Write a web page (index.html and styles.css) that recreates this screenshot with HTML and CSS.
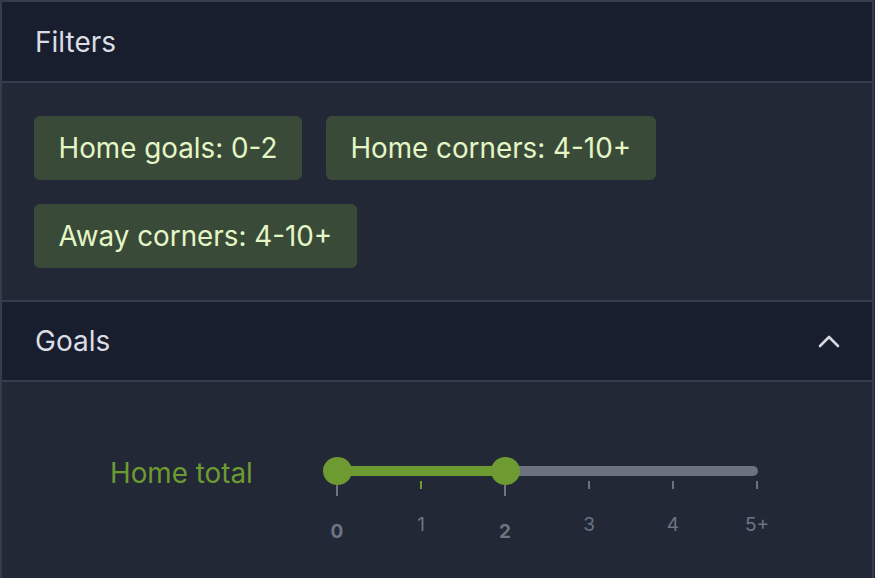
FILE: index.html
```html
<!DOCTYPE html>
<html lang="en">
<head>
<meta charset="utf-8">
<title>Filters</title>
<link rel="stylesheet" href="styles.css">
</head>
<body>
<div class="panel">
  <div class="header">
    <span class="title">Filters</span>
  </div>
  <div class="chips">
    <span class="chip">Home goals: 0-2</span>
    <span class="chip">Home corners: 4-10+</span>
    <span class="chip">Away corners: 4-10+</span>
  </div>
  <div class="header header-sep">
    <span class="title">Goals</span>
    <svg class="chevron" width="22" height="14" viewBox="0 0 22 14" aria-hidden="true">
      <polyline points="2,12 11,3 20,12" fill="none" stroke="#d6d9df" stroke-width="2.6" stroke-linecap="round" stroke-linejoin="round"/>
    </svg>
  </div>
  <div class="goals-body">
    <div class="slider-row">
      <div class="row-label">Home total</div>
      <div class="slider">
        <div class="rail"></div>
        <div class="track" style="left:0%;width:40%"></div>
        <span class="tick tick-active" style="left:20%"></span>
        <span class="tick tick-edge" style="left:0%"></span>
        <span class="tick tick-edge" style="left:40%"></span>
        <span class="tick" style="left:60%"></span>
        <span class="tick" style="left:80%"></span>
        <span class="tick" style="left:100%"></span>
        <span class="handle" style="left:0%"></span>
        <span class="handle" style="left:40%"></span>
        <span class="mark mark-sel" style="left:0%">0</span>
        <span class="mark" style="left:20%">1</span>
        <span class="mark mark-sel" style="left:40%">2</span>
        <span class="mark" style="left:60%">3</span>
        <span class="mark" style="left:80%">4</span>
        <span class="mark" style="left:100%">5+</span>
      </div>
    </div>
  </div>
</div>
</body>
</html>
```

FILE: styles.css
```css
html, body {
  margin: 0;
  padding: 0;
  background: #222836;
}
body {
  font-family: Inter, "Noto Sans", "Liberation Sans", sans-serif;
  width: 875px;
  height: 578px;
  overflow: hidden;
}
.panel {
  width: 874px;
  box-sizing: border-box;
  border: 2px solid #363c4b;
  border-bottom: none;
  background: #222836;
  min-height: 578px;
}
.header {
  height: 79px;
  background: #191e2e;
  border-bottom: 2px solid #363c4b;
  display: flex;
  align-items: center;
  justify-content: space-between;
  padding: 0 33px 0 33px;
}
.header-sep {
  border-top: 2px solid #363c4b;
  height: 78px;
}
.title {
  font-size: 28px;
  color: #dadde4;
}
.chevron {
  display: block;
  margin-right: -1px;
}
.chips {
  display: flex;
  flex-wrap: wrap;
  gap: 24px;
  padding: 33px 32px 32px 32px;
  width: 660px;
}
.chip {
  display: flex;
  align-items: center;
  height: 64px;
  padding: 0 24.5px;
  border-radius: 6px;
  background: #3a4a38;
  color: #e4f6c6;
  font-size: 27.8px;
  box-sizing: border-box;
  white-space: nowrap;
}
.goals-body {
  padding: 75px 0 0 108px;
}
.slider-row {
  display: flex;
  align-items: flex-start;
}
.row-label {
  width: 227px;
  font-size: 27.8px;
  line-height: 32px;
  color: #6e9a32;
}
.slider {
  position: relative;
  width: 420px;
  height: 100px;
}
.rail {
  position: absolute;
  left: 0;
  right: -1px;
  top: 9px;
  height: 10px;
  border-radius: 5px;
  background: #6b7280;
}
.track {
  position: absolute;
  top: 9px;
  height: 10px;
  background: #6e9a32;
}
.handle {
  position: absolute;
  top: 0;
  width: 29px;
  height: 28px;
  margin-left: -14px;
  border-radius: 50%;
  background: #6e9a32;
}
.tick {
  position: absolute;
  top: 24px;
  width: 2px;
  height: 8px;
  margin-left: -1px;
  background: #6b7280;
}
.tick-active {
  background: #6e9a32;
}
.tick-edge {
  top: 28px;
  height: 11px;
}
.mark {
  position: absolute;
  top: 56px;
  font-size: 19px;
  line-height: 24px;
  color: #6d7483;
  transform: translateX(-50%);
}
.mark-sel {
  top: 63px;
  font-weight: 700;
}
```
